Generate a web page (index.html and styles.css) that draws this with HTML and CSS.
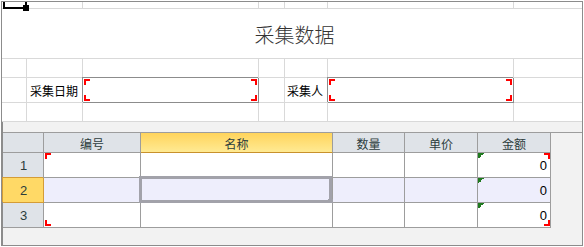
FILE: index.html
```html
<!DOCTYPE html>
<html lang="zh-CN">
<head>
  <meta charset="UTF-8" />
  <title>采集数据</title>
  <link rel="stylesheet" href="styles.css">
</head>
<body>
  <div class="frame">
    <div class="sheet">
      <div class="c a1"></div><div class="c"></div><div class="c"></div><div class="c"></div><div class="c"></div><div class="c"></div><div class="c end"></div>
      <div class="c title">采集数据</div>
      <div class="c"></div><div class="c"></div><div class="c"></div><div class="c"></div><div class="c"></div><div class="c"></div><div class="c end"></div>
      <div class="c"></div>
      <div class="c label">采集日期</div>
      <div class="c field"></div>
      <div class="c"></div>
      <div class="c label">采集人</div>
      <div class="c field"></div>
      <div class="c end"></div>
      <div class="c"></div><div class="c"></div><div class="c"></div><div class="c"></div><div class="c"></div><div class="c"></div><div class="c end"></div>
    </div>

    <div class="lower">
      <div class="grid">
        <div class="h"></div>
        <div class="h">编号</div>
        <div class="h on">名称</div>
        <div class="h">数量</div>
        <div class="h">单价</div>
        <div class="h">金额</div>

        <div class="rh">1</div>
        <div class="d mk tl"></div>
        <div class="d"></div>
        <div class="d"></div>
        <div class="d"></div>
        <div class="d amt mk tr">0</div>

        <div class="rh on">2</div>
        <div class="d r2"></div>
        <div class="d r2 sel"></div>
        <div class="d r2"></div>
        <div class="d r2"></div>
        <div class="d r2 amt">0</div>

        <div class="rh">3</div>
        <div class="d mk bl"></div>
        <div class="d"></div>
        <div class="d"></div>
        <div class="d"></div>
        <div class="d amt mk br">0</div>
      </div>
    </div>
  </div>
</body>
</html>
```

FILE: styles.css
```css
:root {
  --line: #d9d9d9;
  --grid: #9d9d9d;
  --head: #dfe3e8;
  --mark: #f00;
}
body {
  margin: 0;
  background: #fff;
  font-family: "Noto Sans CJK SC", "Liberation Sans", sans-serif;
  color: #000;
}
.frame {
  box-sizing: border-box;
  width: 582px;
  height: 245px;
  margin: 1px 0 0 1px;
  border: 1px solid #8c8c8c;
  display: flex;
  flex-direction: column;
}

/* top sheet */
.sheet {
  display: grid;
  grid-template-columns: 25px 56px 176px 26px 43px 186px 68px;
  grid-template-rows: 7px 50px 19px 25px 19px;
}
.c {
  box-sizing: border-box;
  border-right: 1px solid var(--line);
  border-bottom: 1px solid var(--line);
}
.c.end {
  border-right: 0;
}
.a1 {
  position: relative;
}
.a1::before {
  content: "";
  position: absolute;
  left: 1px;
  top: 0;
  width: 20px;
  height: 5px;
  border: 2px solid #000;
  border-top: 0;
}
.a1::after {
  content: "";
  position: absolute;
  left: 21px;
  top: 3px;
  width: 6px;
  height: 6px;
  background: #000;
}
.title {
  grid-column: 1 / -1;
  border-right: 0;
  display: flex;
  align-items: center;
  justify-content: center;
  padding: 2px 0 0 5px;
  font-size: 20px;
  font-weight: 300;
  color: #333;
}
.label {
  display: flex;
  align-items: center;
  justify-content: flex-end;
  padding-right: 4px;
  font-size: 12px;
  white-space: nowrap;
}
.field {
  border-right-color: #8c8c8c;
  border-bottom-color: #8c8c8c;
  box-shadow: -1px -1px 0 #8c8c8c;
  background:
    linear-gradient(var(--mark), var(--mark)) left 1px top 1px / 2px 6px no-repeat,
    linear-gradient(var(--mark), var(--mark)) left 1px top 1px / 6px 2px no-repeat,
    linear-gradient(var(--mark), var(--mark)) left 1px bottom 1px / 2px 6px no-repeat,
    linear-gradient(var(--mark), var(--mark)) left 1px bottom 1px / 6px 2px no-repeat,
    linear-gradient(var(--mark), var(--mark)) right 1px top 1px / 2px 6px no-repeat,
    linear-gradient(var(--mark), var(--mark)) right 1px top 1px / 6px 2px no-repeat,
    linear-gradient(var(--mark), var(--mark)) right 1px bottom 1px / 2px 6px no-repeat,
    linear-gradient(var(--mark), var(--mark)) right 1px bottom 1px / 6px 2px no-repeat;
}

/* lower table */
.lower {
  flex: 1;
  border-left: 1px solid #8c8c8c;
  background: #f2f2f2;
  padding-top: 10px;
}
.grid {
  border-top: 1px solid var(--grid);
  display: grid;
  grid-template-columns: 41px 97px 192px 72px 73px 73px;
  grid-template-rows: 20px 25px 25px 25px;
}
.h, .rh, .d {
  box-sizing: border-box;
  border-right: 1px solid var(--grid);
  border-bottom: 1px solid var(--grid);
  display: flex;
  align-items: center;
}
.h {
  background: var(--head);
  justify-content: center;
  font-size: 12px;
  color: #2c3c3c;
  padding-top: 1px;
}
.h.on {
  background: linear-gradient(#ffd45c, #ffea93);
  border-bottom-color: #c8912c;
}
.rh {
  background: var(--head);
  justify-content: center;
  font-family: "Liberation Sans", sans-serif;
  font-size: 13px;
  color: #2c3c3c;
  padding-left: 1px;
}
.rh.on {
  background: #ffd966;
  border-right-color: #d49c36;
  border-bottom-color: #d49c36;
  box-shadow: -1px -1px 0 #d49c36;
}
.d {
  background: #fff;
  position: relative;
}
.d.r2 {
  background-color: #eeeefc;
}
.amt {
  justify-content: flex-end;
  padding-right: 3px;
  font-family: "Liberation Sans", sans-serif;
  font-size: 13px;
  background-image: linear-gradient(135deg, #1f7a1f 50%, transparent 50%);
  background-size: 6px 6px;
  background-repeat: no-repeat;
}
.mk::before {
  content: "";
  position: absolute;
  width: 4px;
  height: 4px;
  border: 0 solid var(--mark);
}
.tl::before { top: 0; left: 1px; border-top-width: 2px; border-left-width: 2px; }
.bl::before { bottom: 1px; left: 1px; border-bottom-width: 2px; border-left-width: 2px; }
.tr::before { top: 0; right: 0; border-top-width: 2px; border-right-width: 2px; }
.br::before { bottom: 1px; right: 0; border-bottom-width: 2px; border-right-width: 2px; }

.sel::before {
  content: "";
  position: absolute;
  left: -2px;
  top: -2px;
  right: 0;
  bottom: -1px;
  border: 3px solid #a2a2aa;
}
.sel::after {
  content: "";
  position: absolute;
  right: -2px;
  bottom: -3px;
  width: 6px;
  height: 6px;
  background: #a2a2aa;
}
```
